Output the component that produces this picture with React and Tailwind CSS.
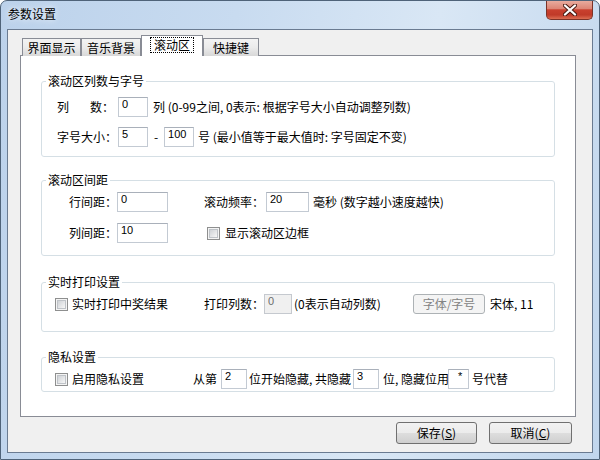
function Field({ value, w, center, disabled }) {
    return (
        <input
            readOnly
            value={value}
            className={
                'h-[20px] shrink-0 pl-[3px] pt-0 pb-[7px] font-["Liberation_Sans",sans-serif] text-[11px] leading-[11px] border outline-none ' +
                (center ? 'text-center pl-0 ' : '') +
                (disabled
                    ? 'bg-[#f0f0f0] border-[#c5c9cf] text-[#6d6d6d] '
                    : 'bg-white border-[#c3cad3] border-t-[#a9b0ba] text-black ')
            }
            style={{ width: w }}
        />
    )
}

function Check() {
    return (
        <span className="flex h-[13px] w-[13px] shrink-0 items-center justify-center border border-[#8e8f8f] bg-[#f4f4f4]">
            <span className="h-[9px] w-[9px] border border-[#bfc3c8] bg-gradient-to-br from-[#cfd2d6] to-[#f7f7f7]"></span>
        </span>
    )
}

function Group({ title, className, children }) {
    return (
        <fieldset className={'mx-[20px] rounded-[3px] border border-[#d5dfe5] ' + className}>
            <legend className="ml-[4px] px-[2px] leading-[14px] text-black">{title}</legend>
            {children}
        </fieldset>
    )
}

function Tab({ label, w, active }) {
    if (active) {
        return (
            <div
                className="relative z-10 flex h-[21px] items-start justify-center border border-b-0 border-[#898c95] bg-white pt-[1px]"
                style={{ width: w }}
            >
                <span className="border border-dotted border-black px-[3px] leading-[14px]">{label}</span>
            </div>
        )
    }
    return (
        <div
            className="flex h-[18px] items-center justify-center border border-b-0 border-[#898c95] bg-gradient-to-b from-[#f3f3f3] via-[#ebebeb] to-[#d8d8d8] pt-[1px] leading-[14px]"
            style={{ width: w }}
        >
            {label}
        </div>
    )
}

function WinButton({ children, w }) {
    return (
        <button
            className="flex h-[22px] items-center justify-center rounded-[3px] border border-[#707070] bg-[linear-gradient(to_bottom,#f2f2f2_0%,#ebebeb_50%,#dddddd_51%,#cfcfcf_100%)] text-[12px] leading-[14px] text-black"
            style={{ width: w }}
        >
            {children}
        </button>
    )
}

export default function App() {
    return (
        <div className="flex h-[460px] w-[600px] flex-col overflow-hidden rounded-t-[7px] border border-[#4f6379] bg-[linear-gradient(100deg,#bcd2eb_0%,#c8dbf0_35%,#d9e7f5_65%,#c1d6ed_100%)] font-['Noto_Sans_CJK_SC',sans-serif] text-[12px] text-black">
            <div className="flex h-[28px] items-start justify-between">
                <div className="pl-[7px] pt-[5px] leading-[16px] [text-shadow:0_0_6px_#ffffff]">参数设置</div>
                <button className="mr-[6px] -mt-[1px] flex h-[20px] w-[47px] items-center justify-center rounded-b-[5px] border border-t-0 border-[#7b3328] bg-[linear-gradient(to_bottom,#eab0a3_0%,#dd8676_45%,#c9402e_52%,#c03a28_78%,#dc6d52_100%)]">
                    <svg width="14" height="12" viewBox="0 0 14 12">
                        <path d="M2 1.5 L12 10.5 M12 1.5 L2 10.5" stroke="#4a1b12" strokeWidth="4.2" strokeLinecap="round" />
                        <path d="M2 1.5 L12 10.5 M12 1.5 L2 10.5" stroke="#ffffff" strokeWidth="2.3" strokeLinecap="round" />
                    </svg>
                </button>
            </div>

            <div className="mx-[6px] mb-[6px] flex flex-1 flex-col border border-[#6a7b91] bg-[#f0f0f0]">
                <div className="ml-[12px] mt-[6px] w-[556px]">
                    <div className="flex h-[20px] items-end pl-[2px]">
                        <Tab label="界面显示" w={59} />
                        <Tab label="音乐背景" w={60} />
                        <Tab label="滚动区" w={62} active />
                        <Tab label="快捷键" w={56} />
                    </div>
                    <div className="-mt-[1px] h-[362px] whitespace-nowrap border border-[#898c95] bg-white">
                        <Group title="滚动区列数与字号" className="mt-[18px]">
                            <div className="flex flex-col gap-[10px] pb-[9px] pl-[15px] pt-[9px] leading-[14px]">
                                <div className="flex h-[20px] items-center">
                                    <span>列</span>
                                    <span className="ml-[21px]">数：</span>
                                    <span className="ml-[4px] flex"><Field value="0" w={30} /></span>
                                    <span className="ml-[5px]">列 (0-99之间, 0表示: 根据字号大小自动调整列数)</span>
                                </div>
                                <div className="flex h-[20px] items-center">
                                    <span>字号大小：</span>
                                    <span className="ml-[1px] flex"><Field value="5" w={30} /></span>
                                    <span className="w-[16px] text-center">-</span>
                                    <Field value="100" w={30} />
                                    <span className="ml-[4px]">号 (最小值等于最大值时: 字号固定不变)</span>
                                </div>
                            </div>
                        </Group>

                        <Group title="滚动区间距" className="mt-[16px]">
                            <div className="flex flex-col gap-[11px] pb-[12px] pt-[5px] leading-[14px]">
                                <div className="flex h-[20px] items-center">
                                    <span className="w-[75px] text-right">行间距：</span>
                                    <Field value="0" w={51} />
                                    <span className="ml-[36px] w-[62px]">滚动频率：</span>
                                    <Field value="20" w={43} />
                                    <span className="ml-[4px]">毫秒 (数字越小速度越快)</span>
                                </div>
                                <div className="flex h-[20px] items-center">
                                    <span className="w-[75px] text-right">列间距：</span>
                                    <Field value="10" w={51} />
                                    <span className="ml-[39px] flex"><Check /></span>
                                    <span className="ml-[5px]">显示滚动区边框</span>
                                </div>
                            </div>
                        </Group>

                        <Group title="实时打印设置" className="mt-[19px]">
                            <div className="mb-[17px] mt-[5px] flex h-[20px] items-center pl-[13px] leading-[14px]">
                                <Check />
                                <span className="ml-[4px] w-[96px] shrink-0">实时打印中奖结果</span>
                                <span className="ml-[36px] w-[60px] shrink-0">打印列数：</span>
                                <Field value="0" w={28} disabled />
                                <span className="ml-[2px] w-[119px] shrink-0">(0表示自动列数)</span>
                                <button className="flex h-[20px] w-[72px] shrink-0 items-center justify-center rounded-[3px] border border-[#adb2b5] bg-[#f4f4f4] text-[12px] leading-[14px] text-[#838383]">字体/字号</button>
                                <span className="ml-[5px]">宋体, 11</span>
                            </div>
                        </Group>

                        <Group title="隐私设置" className="mt-[18px]">
                            <div className="mb-[2px] mt-[5px] flex h-[20px] items-center pl-[13px] leading-[14px]">
                                <Check />
                                <span className="ml-[4px] w-[72px] shrink-0">启用隐私设置</span>
                                <span className="ml-[49px] shrink-0">从第</span>
                                <span className="ml-[4px] flex"><Field value="2" w={26} /></span>
                                <span className="ml-[2px] w-[104px] shrink-0">位开始隐藏, 共隐藏</span>
                                <Field value="3" w={26} />
                                <span className="ml-[4px] w-[65px] shrink-0">位, 隐藏位用</span>
                                <Field value="*" w={21} center />
                                <span className="ml-[3px]">号代替</span>
                            </div>
                        </Group>
                    </div>
                </div>

                <div className="mt-[5px] flex justify-end gap-[12px] pr-[20px]">
                    <WinButton w={81}>保存(<u>S</u>)</WinButton>
                    <WinButton w={83}>取消(<u>C</u>)</WinButton>
                </div>
            </div>
        </div>
    )
}
